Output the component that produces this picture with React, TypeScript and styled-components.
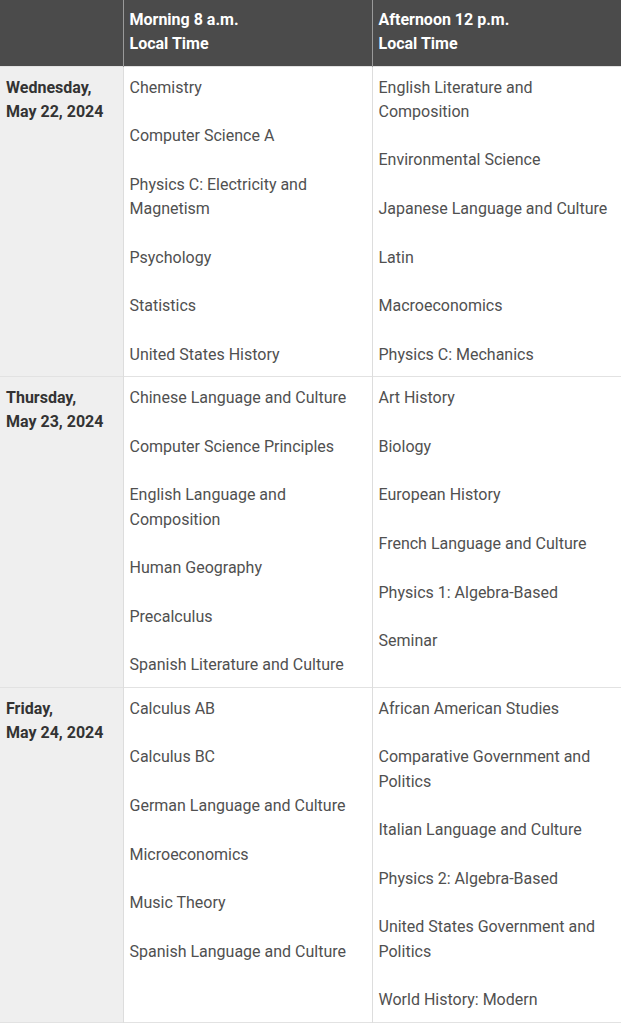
import { FC } from 'react';
import styled, { createGlobalStyle } from 'styled-components';

const GlobalStyle = createGlobalStyle`
  html, body {
    margin: 0;
    padding: 0;
    background: #ffffff;
  }
  body {
    font-family: Roboto, 'Liberation Sans', sans-serif;
  }
`;

const ScheduleTable = styled.table`
  width: 621px;
  border-collapse: collapse;
  table-layout: fixed;
  font-size: 16px;
  line-height: 24.3px;
  border-bottom: 1px solid #e2e2e2;
`;

const HeaderCell = styled.th`
  background: #4b4b4b;
  color: #ffffff;
  font-weight: 700;
  text-align: left;
  vertical-align: top;
  padding: 8px 6px 9px;
  border-left: 1px solid #9a9a9a;
  &:first-child {
    border-left: none;
  }
`;

const DayCell = styled.th`
  background: #efefef;
  color: #333333;
  font-weight: 700;
  text-align: left;
  vertical-align: top;
  padding: 9px 6px 9px;
  border-top: 1px solid #e2e2e2;
`;

const SubjectCell = styled.td`
  background: #ffffff;
  color: #505050;
  vertical-align: top;
  padding: 9px 6px 9px;
  border-left: 1px solid #dddddd;
  border-top: 1px solid #e2e2e2;
`;

const Subject = styled.p`
  margin: 0 0 24.3px;
  &:last-child {
    margin-bottom: 0;
  }
`;

type ExamDay = {
  weekDay: string;
  date: string;
  morning: string[];
  afternoon: string[];
};

const schedule: ExamDay[] = [
  {
    weekDay: 'Wednesday,',
    date: 'May 22, 2024',
    morning: [
      'Chemistry',
      'Computer Science A',
      'Physics C: Electricity and Magnetism',
      'Psychology',
      'Statistics',
      'United States History',
    ],
    afternoon: [
      'English Literature and Composition',
      'Environmental Science',
      'Japanese Language and Culture',
      'Latin',
      'Macroeconomics',
      'Physics C: Mechanics',
    ],
  },
  {
    weekDay: 'Thursday,',
    date: 'May 23, 2024',
    morning: [
      'Chinese Language and Culture',
      'Computer Science Principles',
      'English Language and Composition',
      'Human Geography',
      'Precalculus',
      'Spanish Literature and Culture',
    ],
    afternoon: [
      'Art History',
      'Biology',
      'European History',
      'French Language and Culture',
      'Physics 1: Algebra-Based',
      'Seminar',
    ],
  },
  {
    weekDay: 'Friday,',
    date: 'May 24, 2024',
    morning: [
      'Calculus AB',
      'Calculus BC',
      'German Language and Culture',
      'Microeconomics',
      'Music Theory',
      'Spanish Language and Culture',
    ],
    afternoon: [
      'African American Studies',
      'Comparative Government and Politics',
      'Italian Language and Culture',
      'Physics 2: Algebra-Based',
      'United States Government and Politics',
      'World History: Modern',
    ],
  },
];

const SubjectList: FC<{ subjects: string[] }> = ({ subjects }) => (
  <SubjectCell>
    {subjects.map((s) => (
      <Subject key={s}>{s}</Subject>
    ))}
  </SubjectCell>
);

export default function App() {
  return (
    <>
      <GlobalStyle />
      <ScheduleTable>
        <colgroup>
          <col style={{ width: 123 }} />
          <col style={{ width: 249 }} />
          <col style={{ width: 249 }} />
        </colgroup>
        <thead>
          <tr>
            <HeaderCell />
            <HeaderCell>
              Morning 8 a.m.
              <br />
              Local Time
            </HeaderCell>
            <HeaderCell>
              Afternoon 12 p.m.
              <br />
              Local Time
            </HeaderCell>
          </tr>
        </thead>
        <tbody>
          {schedule.map((day) => (
            <tr key={day.date}>
              <DayCell>
                {day.weekDay}
                <br />
                {day.date}
              </DayCell>
              <SubjectList subjects={day.morning} />
              <SubjectList subjects={day.afternoon} />
            </tr>
          ))}
        </tbody>
      </ScheduleTable>
    </>
  );
}
